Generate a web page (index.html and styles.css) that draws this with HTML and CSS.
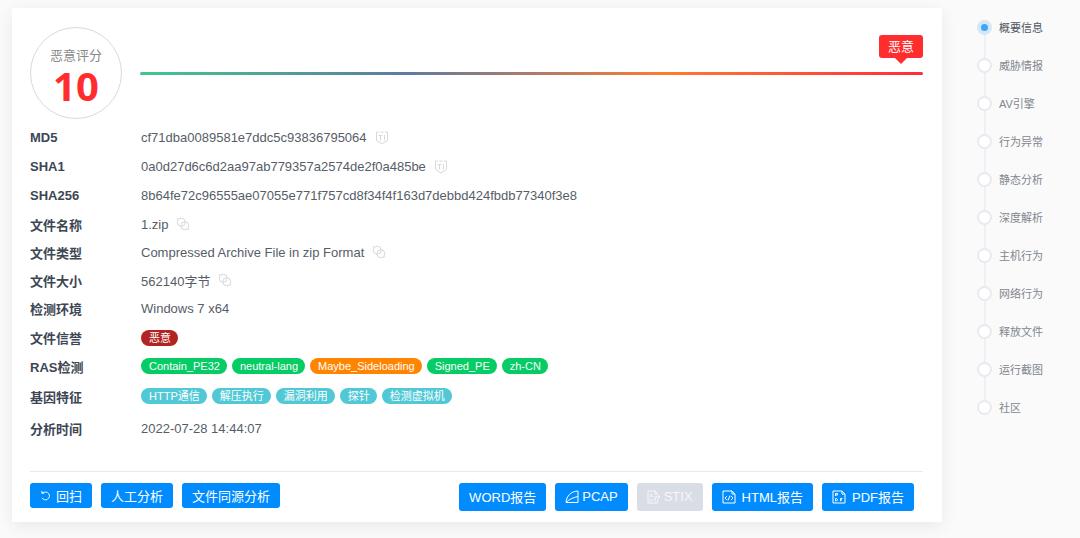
FILE: index.html
```html
<!DOCTYPE html>
<html lang="zh-CN">
<head>
    <meta charset="UTF-8">
    <meta name="viewport" content="width=device-width, initial-scale=1.0">
    <title>概要信息</title>
    <link rel="stylesheet" href="styles.css">
</head>
<body>

<!-- 图标 -->
<svg class="sprite" aria-hidden="true">
    <symbol id="icon-ti" viewBox="0 0 14 14">
        <path d="M4 1H1.500v8.500L7 13l5.500-3.500V1H10M5.500 1h3M3.500 4.500h4M5.500 4.500v5M9.500 4v5.500"/>
    </symbol>
    <symbol id="icon-link" viewBox="0 0 14 14">
        <circle cx="5.200" cy="5.200" r="4"/>
        <circle cx="8.800" cy="8.800" r="4"/>
        <path d="M1 2.500L2.500 1M13 11.500L11.500 13"/>
    </symbol>
    <symbol id="icon-redo" viewBox="0 0 12 12">
        <path d="M2 3.200h1.200a4.300 4.300 0 1 1-1 5.300M2 1v2.500h2.500"/>
    </symbol>
    <symbol id="icon-pcap" viewBox="0 0 14 14">
        <path d="M1 12.500C1.500 6 6 1.300 13 1v11.500zM1 12.500C4 9.500 8 7.500 13 6.500"/>
    </symbol>
    <symbol id="icon-stix" viewBox="0 0 14 14">
        <path d="M10.500 4.500V3.500L8 1H1v12h9.500V9.500M8 1v3h2.500M7 7h6M11 5l2 2-2 2M3 4l2.500 3M5.500 4L3 7M3 9v2.500M5 9v2.500M7 9h2M8 9v2.500"/>
    </symbol>
    <symbol id="icon-html" viewBox="0 0 14 14">
        <path d="M1 1h9l3 3v9H1zM10 1v3h3M5 6L3 8l2 2M9 6l2 2-2 2M8 5.500l-2 5"/>
    </symbol>
    <symbol id="icon-pdf" viewBox="0 0 14 14">
        <path d="M1 1h9l3 3v9H1zM10 1v3h3M3.500 6V3.500h2v1.500h-2M3.500 11V8.500h1l1 1v.5l-1 1zM8.500 11.200V8.500h2M8.500 10h1.500"/>
    </symbol>
</svg>

<div class="page">
    <main class="card">
        <!-- 评分 -->
        <section class="summary">
            <div class="score">
                <span class="score-label">恶意评分</span>
                <span class="score-value">10</span>
            </div>
            <div class="level">
                <span class="level-tip">恶意</span>
                <div class="level-bar"></div>
            </div>
        </section>

        <!-- 文件信息 -->
        <dl class="info">
            <div class="row">
                <dt>MD5</dt>
                <dd>cf71dba0089581e7ddc5c93836795064 <svg class="icon icon-gray"><use href="#icon-ti"/></svg></dd>
            </div>
            <div class="row">
                <dt>SHA1</dt>
                <dd>0a0d27d6c6d2aa97ab779357a2574de2f0a485be <svg class="icon icon-gray"><use href="#icon-ti"/></svg></dd>
            </div>
            <div class="row">
                <dt>SHA256</dt>
                <dd>8b64fe72c96555ae07055e771f757cd8f34f4f163d7debbd424fbdb77340f3e8</dd>
            </div>
            <div class="row row-short">
                <dt>文件名称</dt>
                <dd>1.zip <svg class="icon icon-gray"><use href="#icon-link"/></svg></dd>
            </div>
            <div class="row row-short">
                <dt>文件类型</dt>
                <dd>Compressed Archive File in zip Format <svg class="icon icon-gray"><use href="#icon-link"/></svg></dd>
            </div>
            <div class="row row-short">
                <dt>文件大小</dt>
                <dd>562140字节 <svg class="icon icon-gray"><use href="#icon-link"/></svg></dd>
            </div>
            <div class="row">
                <dt>检测环境</dt>
                <dd>Windows 7 x64</dd>
            </div>
            <div class="row">
                <dt>文件信誉</dt>
                <dd class="tags"><span class="tag tag-danger">恶意</span></dd>
            </div>
            <div class="row row-short">
                <dt>RAS检测</dt>
                <dd class="tags">
                    <span class="tag tag-green">Contain_PE32</span>
                    <span class="tag tag-green">neutral-lang</span>
                    <span class="tag tag-orange">Maybe_Sideloading</span>
                    <span class="tag tag-green">Signed_PE</span>
                    <span class="tag tag-green">zh-CN</span>
                </dd>
            </div>
            <div class="row row-tall">
                <dt>基因特征</dt>
                <dd class="tags">
                    <span class="tag tag-cyan">HTTP通信</span>
                    <span class="tag tag-cyan">解压执行</span>
                    <span class="tag tag-cyan">漏洞利用</span>
                    <span class="tag tag-cyan">探针</span>
                    <span class="tag tag-cyan">检测虚拟机</span>
                </dd>
            </div>
            <div class="row row-tall">
                <dt>分析时间</dt>
                <dd>2022-07-28 14:44:07</dd>
            </div>
        </dl>

        <!-- 操作按钮 -->
        <footer class="actions">
            <div class="btn-group">
                <button type="button" class="btn"><svg class="icon icon-small"><use href="#icon-redo"/></svg>回扫</button>
                <button type="button" class="btn">人工分析</button>
                <button type="button" class="btn">文件同源分析</button>
            </div>
            <div class="btn-group btn-group-report">
                <button type="button" class="btn">WORD报告</button>
                <button type="button" class="btn btn-tight"><svg class="icon"><use href="#icon-pcap"/></svg>PCAP</button>
                <button type="button" class="btn btn-tight" disabled><svg class="icon"><use href="#icon-stix"/></svg>STIX</button>
                <button type="button" class="btn"><svg class="icon"><use href="#icon-html"/></svg>HTML报告</button>
                <button type="button" class="btn"><svg class="icon"><use href="#icon-pdf"/></svg>PDF报告</button>
            </div>
        </footer>
    </main>

    <!-- 右侧导航 -->
    <nav class="steps">
        <a class="step active" href="#">概要信息</a>
        <a class="step" href="#">威胁情报</a>
        <a class="step" href="#">AV引擎</a>
        <a class="step" href="#">行为异常</a>
        <a class="step" href="#">静态分析</a>
        <a class="step" href="#">深度解析</a>
        <a class="step" href="#">主机行为</a>
        <a class="step" href="#">网络行为</a>
        <a class="step" href="#">释放文件</a>
        <a class="step" href="#">运行截图</a>
        <a class="step" href="#">社区</a>
    </nav>
</div>

</body>
</html>
```
FILE: styles.css
```css
*,
*::before,
*::after {
    box-sizing: border-box;
}

body {
    margin: 0;
    background-color: #fafafa;
    font-family: "Liberation Sans", "Noto Sans CJK SC", sans-serif;
    font-size: 13px;
    color: #565d69;
}

.sprite {
    position: absolute;
    width: 0;
    height: 0;
}

.page {
    display: flex;
    align-items: flex-start;
    padding: 8px 0 16px 12px;
}

/* 主卡片 */
.card {
    flex: 1;
    padding: 19px 19px 11px 18px;
    background-color: #fff;
    box-shadow: 0 4px 16px rgba(0, 0, 0, 0.07);
}

/* 评分 */
.summary {
    display: flex;
    gap: 18px;
}

.score {
    display: flex;
    flex-direction: column;
    align-items: center;
    width: 92px;
    height: 92px;
    padding-top: 18px;
    border: 1px solid #d9d9d9;
    border-radius: 50%;
}

.score-label {
    line-height: 20px;
    color: #888;
}

.score-value {
    font-family: "Noto Sans", sans-serif;
    font-size: 40px;
    font-weight: bold;
    line-height: 40px;
    color: #ff2d2e;
}

.level {
    flex: 1;
    display: flex;
    flex-direction: column;
    align-items: flex-end;
    gap: 14px;
    padding-top: 8px;
}

.level-tip {
    position: relative;
    padding: 0 9px;
    border-radius: 3px;
    background-color: #ff2d2e;
    line-height: 23px;
    color: #fff;
}

.level-tip::after {
    content: "";
    position: absolute;
    top: 100%;
    left: 50%;
    transform: translateX(-50%);
    border: 6px solid transparent;
    border-top-color: #ff2d2e;
    border-bottom: 0;
}

.level-bar {
    width: 100%;
    height: 3px;
    border-radius: 2px;
    background: linear-gradient(to right, #42c78f, #5f7b9f 34%, #ff7b30 67%, #ff2d3c);
}

/* 文件信息 */
.info {
    margin: 0;
    padding: 4px 0 27px;
}

.row {
    display: flex;
    align-items: center;
    height: 29px;
}

.row-short {
    height: 28px;
}

.row-tall {
    height: 32px;
}

.row dt {
    width: 111px;
    font-weight: bold;
    color: #3d4654;
}

.row dd {
    display: flex;
    align-items: center;
    gap: 8px;
    margin: 0;
}

.row .tags {
    gap: 5px;
}

.icon {
    width: 14px;
    height: 14px;
    fill: none;
    stroke: currentColor;
    stroke-width: 1;
}

.icon-gray {
    color: #d8d8d8;
}

.icon-small {
    width: 11px;
    height: 11px;
}

.tag {
    padding: 0 7px 0 8px;
    border-radius: 8px;
    font-size: 11px;
    line-height: 16px;
    color: #fff;
}

.tag-danger {
    background-color: #b22424;
}

.tag-green {
    background-color: #06cc65;
}

.tag-orange {
    background-color: #ff8400;
}

.tag-cyan {
    background-color: #50c8d5;
}

/* 按钮 */
.actions {
    display: flex;
    justify-content: space-between;
    align-items: flex-start;
    padding-top: 11px;
    border-top: 1px solid #e8eaf2;
}

.btn-group {
    display: flex;
    gap: 9px;
}

.btn-group-report {
    margin-right: 9px;
}

.btn {
    display: flex;
    align-items: center;
    gap: 5px;
    height: 25px;
    padding: 0 10px 1px;
    border: 0;
    border-radius: 3px;
    background-color: #008cff;
    font-family: inherit;
    font-size: 13px;
    color: #fff;
    cursor: pointer;
}

.btn-group-report .btn {
    height: 28px;
    gap: 6px;
}

.btn-group-report .btn-tight {
    gap: 3px;
}

.btn:disabled {
    background-color: #d9dde5;
    color: #f6f7f9;
    cursor: default;
}

/* 右侧导航 */
.steps {
    width: 138px;
    padding-left: 35px;
}

.step {
    position: relative;
    display: flex;
    align-items: center;
    gap: 7px;
    height: 38px;
    font-size: 11px;
    color: #7f868e;
    text-decoration: none;
}

.step::before {
    content: "";
    z-index: 1;
    width: 15px;
    height: 15px;
    border: 2px solid #e8eaf2;
    border-radius: 50%;
    background-color: #fff;
}

/* 连接线 */
.step:not(:last-child)::after {
    content: "";
    position: absolute;
    top: 50%;
    left: 7px;
    width: 2px;
    height: 100%;
    background-color: #eff0f3;
}

.step.active {
    color: #4d5663;
}

.step.active::before {
    border: 4px solid #d3e8f8;
    background-color: #3fa5f5;
}
```
